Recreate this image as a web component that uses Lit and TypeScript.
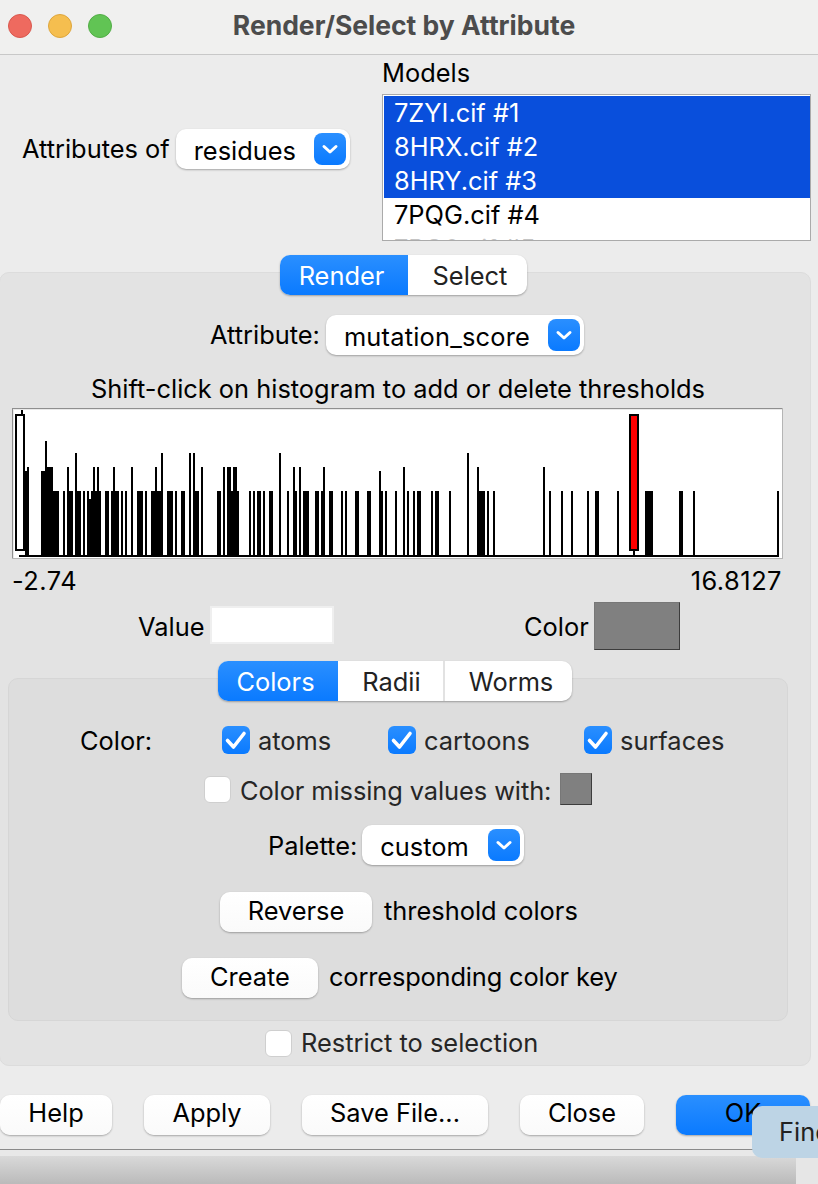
import { LitElement, html, css, svg } from "lit";
import { customElement } from "lit/decorators.js";

// [x0, x1, top] in 3x crop units, per crop offset
const T = 272;
const A: number[][] = [
  [75,81,212],[81,87,200],[123,135,212],[135,141,122],[141,159,200],[159,177,T],[189,195,T],[201,207,200],[207,219,T],[225,231,158],[231,243,T],[249,255,T],[261,267,T],[267,273,296],[273,279,T],[279,285,200],[285,291,T],[291,297,200],[297,303,T],[315,327,T],[333,339,T],[339,345,200],[345,357,T],[363,369,T],[375,381,T],[393,399,200],[411,429,T],[435,441,T],[453,465,T],[465,471,200],[471,483,T],[483,489,158],[501,519,T],[525,531,T],[543,555,T],[567,573,158],[579,585,158],[585,597,T],[603,609,200],[651,663,T],[669,675,200],[681,693,200],[693,699,T],[699,711,200],[711,717,T],[747,753,T],[759,765,T],[771,783,T],[789,795,T],[807,810,T],
];
const B: number[][] = [
  [0,9,T],[27,33,158],[51,57,T],[69,75,200],[75,81,T],[87,93,200],[99,117,T],[135,147,T],[153,159,T],[159,165,200],[177,189,T],[213,219,T],[225,231,T],[255,267,T],[291,303,T],[327,333,212],[333,339,T],[345,351,T],[375,381,T],[399,405,200],[411,417,T],[429,435,T],[441,453,T],[483,489,T],[495,507,T],[537,543,T],[591,597,158],[621,627,200],[627,645,T],[651,657,T],[669,675,T],
];
const C: number[][] = [
  [9,15,200],[27,33,T],[63,69,T],[93,99,T],[141,147,T],[165,177,T],[231,237,T],[279,285,440],[315,339,T],[417,429,T],[459,465,T],[711,717,T],
];
const bars = [
  ...A.map(([a, b, t]) => [a / 3, b / 3, t]),
  ...B.map(([a, b, t]) => [270 + a / 3, 270 + b / 3, t]),
  ...C.map(([a, b, t]) => [540 + a / 3, 540 + b / 3, t]),
];

const chevron = html`<span class="chev"><svg width="32" height="32" viewBox="0 0 32 32"><path d="M10 13.5 L16 19 L22 13.5" fill="none" stroke="#fff" stroke-width="3" stroke-linecap="round" stroke-linejoin="round"/></svg></span>`;
const check = html`<span class="check on"><svg width="28" height="28" viewBox="0 0 28 28"><path d="M5.5 14.5 L11.5 21 L22 7.5" fill="none" stroke="#fff" stroke-width="3.6" stroke-linecap="round" stroke-linejoin="round"/></svg></span>`;

@customElement("app-root")
export class AppRoot extends LitElement {
  static styles = css`
    :host { display: block; width: 818px; height: 1184px; position: relative; overflow: hidden; background: #ececec;
      font-family: Inter, "Liberation Sans", sans-serif; font-size: 25.4px; color: #000; }
    .title { box-sizing: border-box; background: #f0f0ef; border-bottom: 1px solid #c8c8c8; display: flex; align-items: center; padding: 0 0 2px 8px; gap: 16px; height: 55px; }
    .dot { width: 24px; height: 24px; border-radius: 50%; box-sizing: border-box; }
    .red { background: #ee6a5f; border: 1px solid #d9584e; }
    .yellow { background: #f5be4f; border: 1px solid #dea63c; }
    .green { background: #61c454; border: 1px solid #52ad46; }
    .title-text { flex: 1; text-align: center; font-weight: 700; font-size: 26.5px; color: #4c4c4c; margin: 0 130px 3px -8px; white-space: nowrap; }
    .top { height: 217px; display: flex; }
    .attr { width: 382px; box-sizing: border-box; padding: 74px 0 0 22px; display: flex; gap: 6px; align-items: flex-start; }
    .attr > .lbl { line-height: 40px; }
    .models { flex: 1; display: flex; flex-direction: column; }
    .models .lbl { height: 39px; line-height: 36px; }
    .list { width: 429px; height: 147px; box-sizing: border-box; border: 1px solid #aaa; padding: 1px 0 0 1px; background: #fff; overflow: hidden; }
    .row { height: 34px; line-height: 34px; padding-left: 10px; background: #fff; }
    .row.sel { background: #094fdc; color: #fff; }
    .row.ghost { color: #c4c4c4; height: 8px; }
    .select { display: inline-flex; align-items: center; justify-content: space-between; height: 40px; box-sizing: border-box; background: #fff; border-radius: 10px; padding: 0 4px 0 18px; box-shadow: 0 1px 2px rgba(0,0,0,.3); line-height: 40px; flex: none; }
    .select .val { position: relative; top: 2px; }
    .chev { width: 32px; height: 32px; border-radius: 8px; background: linear-gradient(#2a8fff, #0a7aff); display: block; }
    .chev svg { display: block; }
    .s1 { width: 174px; }
    .s2 { width: 258px; letter-spacing: 0.2px; }
    .s3 { width: 162px; }
    .panel { width: 812px; height: 794px; box-sizing: border-box; background: #e3e3e3; border: 1px solid #dcdcdc; border-radius: 10px; margin-left: -1px; display: flex; flex-direction: column; }
    .seg { display: inline-flex; height: 40px; border-radius: 10px; background: #fff; box-shadow: 0 1px 2px rgba(0,0,0,.3); align-self: flex-start; overflow: hidden; color: #222; flex: none; }
    .seg span { display: flex; align-items: center; justify-content: center; box-sizing: border-box; }
    .seg .on { background: linear-gradient(#2a8fff, #0a7aff); color: #fff; }
    .seg .sep { border-left: 2px solid #e2e2e2; }
    .seg .pr { padding-right: 5px; }
    .seg .pl { padding-left: 5px; }
    .seg .pl2 { padding-left: 2px; }
    .seg1 { margin: -18px 0 0 280px; }
    .seg2 { margin: -18px 0 0 209px; }
    .attrrow { margin-top: 20px; display: flex; justify-content: center; gap: 6px; align-items: center; height: 40px; padding-right: 16px; flex: none; }
    .attrrow > span:first-child { padding-bottom: 2px; }
    .hint { margin-top: 19px; text-align: center; height: 30px; line-height: 30px; padding-right: 14px; white-space: nowrap; flex: none; }
    .hist { display: block; margin: 4px 0 0 12px; flex: none; }
    .range { display: flex; justify-content: space-between; width: 770px; margin: 6px 0 0 12px; height: 31px; line-height: 32px; letter-spacing: 0.5px; flex: none; }
    .valrow { display: flex; align-items: center; height: 48px; margin-top: 6px; flex: none; }
    .valrow .l1 { margin-left: 138px; width: 72px; }
    .input { width: 124px; height: 38px; box-sizing: border-box; background: #fff; border: 2px solid #efefef; margin-bottom: 2px; }
    .valrow .l2 { margin-left: 190px; width: 70px; }
    .swatch { background: #808080; box-sizing: border-box; border: 1px solid #777; border-right-color: #3c3c3c; border-bottom-color: #3c3c3c; flex: none; }
    .sw1 { width: 86px; height: 48px; }
    .sw2 { width: 32px; height: 32px; }
    .inner { margin: 28px 0 0 8px; width: 780px; height: 343px; box-sizing: border-box; background: #dddddd; border: 1px solid #d6d6d6; border-radius: 10px; display: flex; flex-direction: column; flex: none; }
    .colrow { height: 28px; margin-top: 25px; display: flex; align-items: center; flex: none; }
    .check { width: 28px; height: 28px; border-radius: 6px; display: block; flex: none; box-sizing: border-box; }
    .check.on { background: linear-gradient(#2a8fff, #0a7aff); }
    .check.off { width: 27px; height: 27px; background: #fff; border: 1px solid #cfcfcf; }
    .check svg { display: block; }
    .t { color: #262626; }
    .colrow .c { margin-left: 71px; width: 142px; }
    .colrow .gap8 { margin-left: 8px; }
    .atoms { width: 130px; }
    .cartoons { width: 160px; }
    .missrow { height: 32px; margin-top: 19px; display: flex; align-items: center; padding-left: 195px; flex: none; }
    .missrow .t { margin-left: 9px; width: 320px; white-space: nowrap; padding-top: 2px; letter-spacing: -0.08px; }
    .palrow { height: 40px; margin-top: 20px; display: flex; align-items: center; padding-left: 259px; gap: 5px; flex: none; }
    .btn { height: 40px; box-sizing: border-box; background: linear-gradient(#fff, #fafafa); border-radius: 10px; box-shadow: 0 1px 2px rgba(0,0,0,.3); display: flex; align-items: center; justify-content: center; flex: none; }
    .btnrow { height: 40px; display: flex; align-items: center; gap: 12px; flex: none; }
    .btnrow > span { padding-bottom: 4px; }
    .btnrow > .btn { padding-bottom: 4px; }
    .btnrow .lbl2 { height: 40px; box-sizing: border-box; display: flex; align-items: center; }
    .r1 { margin-top: 27px; padding-left: 211px; }
    .r2 { margin-top: 26px; padding-left: 173px; }
    .r2 .lbl2 { letter-spacing: -0.15px; margin-left: -1px; }
    .rev { width: 152px; }
    .crt { width: 136px; }
    .restrict { height: 26px; margin-top: 9px; display: flex; align-items: center; gap: 9px; padding-left: 265px; flex: none; }
    .restrict .t { padding-bottom: 2px; }
    .bottom { display: flex; gap: 32px; height: 40px; margin-top: 29px; }
    .bottom .btn { padding-bottom: 5px; }
    .b-help { width: 112px; } .b-apply { width: 126px; } .b-save { width: 186px; } .b-close { width: 124px; }
    .bottom .b-ok { width: 134px; background: linear-gradient(#2a8fff, #0a7aff); }
    .footline { margin-top: 14px; height: 6px; border-top: 1px solid #8a8a8a; background: #e8e8e8; }
    .foot { display: flex; height: 30px; }
    .foot .g { width: 796px; background: linear-gradient(#d9d9d9, #b8b8b8); }
    .foot .h { flex: 1; background: #e6e6e6; }
    .tip { position: absolute; left: 752px; top: 1106px; width: 80px; height: 52px; box-sizing: border-box; background: #bdd4e5; border-radius: 10px; padding-left: 27px; line-height: 52px; color: #222; overflow: hidden; }
  `;

  render() {
    return html`
      <div class="title">
        <span class="dot red"></span><span class="dot yellow"></span><span class="dot green"></span>
        <span class="title-text">Render/Select by Attribute</span>
      </div>
      <div class="top">
        <div class="attr">
          <span class="lbl">Attributes of</span>
          <span class="select s1"><span class="val">residues</span>${chevron}</span>
        </div>
        <div class="models">
          <div class="lbl">Models</div>
          <div class="list">
            <div class="row sel">7ZYI.cif #1</div>
            <div class="row sel">8HRX.cif #2</div>
            <div class="row sel">8HRY.cif #3</div>
            <div class="row">7PQG.cif #4</div>
            <div class="row ghost">7PQ0.cif #5</div>
          </div>
        </div>
      </div>
      <div class="panel">
        <div class="seg seg1"><span class="on pr" style="width:128px">Render</span><span class="pl" style="width:119px">Select</span></div>
        <div class="attrrow"><span>Attribute:</span><span class="select s2"><span class="val">mutation_score</span>${chevron}</span></div>
        <div class="hint">Shift-click on histogram to add or delete thresholds</div>
        ${this.hist()}
        <div class="range"><span>-2.74</span><span>16.8127</span></div>
        <div class="valrow"><span class="l1">Value</span><span class="input"></span><span class="l2">Color</span><span class="swatch sw1"></span></div>
        <div class="inner">
          <div class="seg seg2"><span class="on pr" style="width:120px">Colors</span><span class="pl2" style="width:105px">Radii</span><span class="sep pl" style="width:129px">Worms</span></div>
          <div class="colrow">
            <span class="c">Color:</span>
            ${check}<span class="t gap8 atoms">atoms</span>
            ${check}<span class="t gap8 cartoons">cartoons</span>
            ${check}<span class="t gap8">surfaces</span>
          </div>
          <div class="missrow"><span class="check off"></span><span class="t">Color missing values with:</span><span class="swatch sw2"></span></div>
          <div class="palrow"><span>Palette:</span><span class="select s3"><span class="val">custom</span>${chevron}</span></div>
          <div class="btnrow r1"><span class="btn rev">Reverse</span><span class="lbl2">threshold colors</span></div>
          <div class="btnrow r2"><span class="btn crt">Create</span><span class="lbl2">corresponding color key</span></div>
        </div>
        <div class="restrict"><span class="check off"></span><span class="t">Restrict to selection</span></div>
      </div>
      <div class="bottom">
        <span class="btn b-help">Help</span><span class="btn b-apply">Apply</span><span class="btn b-save">Save File...</span><span class="btn b-close">Close</span><span class="btn b-ok">OK</span>
      </div>
      <div class="footline"></div>
      <div class="foot"><span class="g"></span><span class="h"></span></div>
      <div class="tip">Find</div>
    `;
  }

  hist() {
    const W = 771, H = 151;
    const y = (z: number) => Math.round(400 + z / 3 - 408);
    return html`<svg class="hist" width=${W} height=${H} viewBox="0 0 ${W} ${H}" shape-rendering="crispEdges">
      <rect width=${W} height=${H} fill="#b5b5b5"/>
      <rect width=${W - 1} height=${H - 1} fill="#8f8f8f" />
      <rect x="1" y="1" width=${W - 2} height=${H - 2} fill="#fff"/>
      <rect x="1" y="1" width=${W - 2} height="1" fill="#e9e9e9"/>
      <rect x="1" y="1" width="1" height=${H - 2} fill="#e9e9e9"/>
      ${bars.map(([a, b, t]) => svg`<rect x=${a - 12} y=${y(t)} width=${b - a} height=${y(468) - y(t)} fill="#000"/>`)}
      <rect x=${19 - 12} y=${y(464)} width=${779 - 19} height="2" fill="#000"/>
      <rect x=${21 - 12} y=${y(30)} width="2" height="5" fill="#000"/>
      <rect x=${16 - 12} y=${y(44)} width="8" height="135" fill="#fff" stroke="#000" stroke-width="2"/>
      <rect x=${630 - 12} y=${y(44)} width="8" height="135" fill="#f00" stroke="#000" stroke-width="2"/>
    </svg>`;
  }
}
